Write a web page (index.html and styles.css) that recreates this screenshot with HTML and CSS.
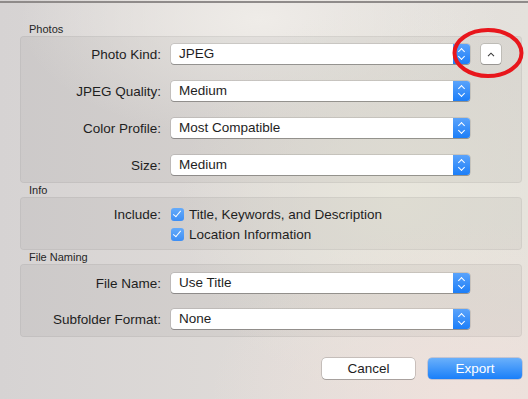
FILE: index.html
```html
<!DOCTYPE html>
<html lang="en">

<head>
    <meta charset="UTF-8">
    <meta name="viewport" content="width=device-width, initial-scale=1.0">
    <title>Export Photos</title>
    <link rel="stylesheet" href="styles.css">
</head>

<body>
    <div class="window">
        <!-- Photos -->
        <div class="section-title">Photos</div>
        <div class="group group-photos">
            <div class="row">
                <label class="row-label">Photo Kind:</label>
                <div class="popup"><span class="popup-text">JPEG</span><span class="popup-arrows"></span></div>
                <button class="disclosure">
                    <svg width="8" height="5" viewBox="0 0 8 5"><path d="M1 4.2 L4 1.2 L7 4.2" fill="none" stroke="#3a3a3a" stroke-width="1.1"/></svg>
                </button>
            </div>
            <div class="row">
                <label class="row-label">JPEG Quality:</label>
                <div class="popup"><span class="popup-text">Medium</span><span class="popup-arrows"></span></div>
            </div>
            <div class="row">
                <label class="row-label">Color Profile:</label>
                <div class="popup"><span class="popup-text">Most Compatible</span><span class="popup-arrows"></span></div>
            </div>
            <div class="row">
                <label class="row-label">Size:</label>
                <div class="popup"><span class="popup-text">Medium</span><span class="popup-arrows"></span></div>
            </div>
        </div>

        <!-- Info -->
        <div class="section-title">Info</div>
        <div class="group group-info">
            <div class="row check-row">
                <label class="row-label">Include:</label>
                <div class="check"><span class="box"></span>Title, Keywords, and Description</div>
            </div>
            <div class="row check-row">
                <span class="row-label"></span>
                <div class="check"><span class="box"></span>Location Information</div>
            </div>
        </div>

        <!-- File Naming -->
        <div class="section-title">File Naming</div>
        <div class="group group-naming">
            <div class="row">
                <label class="row-label">File Name:</label>
                <div class="popup"><span class="popup-text">Use Title</span><span class="popup-arrows"></span></div>
            </div>
            <div class="row">
                <label class="row-label">Subfolder Format:</label>
                <div class="popup"><span class="popup-text">None</span><span class="popup-arrows"></span></div>
            </div>
        </div>

        <div class="buttons">
            <button class="btn">Cancel</button>
            <button class="btn btn-primary">Export</button>
        </div>

        <!-- red annotation circle -->
        <svg class="marker" width="80" height="60" viewBox="0 0 80 60">
            <ellipse cx="40" cy="30" rx="33.5" ry="23" fill="none" stroke="#e8161c" stroke-width="4"/>
        </svg>
    </div>
</body>

</html>
```

FILE: styles.css
```css
/* base */
html, body {
    margin: 0;
    padding: 0;
}

body {
    font-family: "Liberation Sans", Arial, sans-serif;
    font-size: 13.5px;
    color: #1e1e1e;
    width: 528px;
    height: 399px;
    overflow: hidden;
    background-color: #e2dedb;
    background-image:
        radial-gradient(ellipse 260px 180px at 470px 400px, #efe1dc 0%, rgba(239, 225, 220, 0) 100%),
        radial-gradient(ellipse 220px 200px at 400px 200px, #e8e6dc 0%, rgba(232, 230, 220, 0) 100%),
        radial-gradient(ellipse 240px 120px at 260px 20px, #efece8 0%, rgba(239, 236, 232, 0) 100%),
        linear-gradient(90deg, #d6d3d3 0%, #dfdbd8 50%, #e4e1dc 100%);
}

.window {
    position: relative;
    height: 396px;
    border-top: 2px solid #8f8b8a;
    margin-top: 1px;
    padding: 19px 6px 0 20px;
    box-sizing: border-box;
}

/* section titles */
.section-title {
    font-size: 11px;
    line-height: 14px;
    padding-left: 9px;
    color: #262626;
}

/* grouped boxes */
.group {
    background-color: rgba(0, 0, 0, 0.045);
    border: 1px solid rgba(0, 0, 0, 0.05);
    border-radius: 4px;
    display: flex;
    flex-direction: column;
}

.group-photos {
    height: 147px;
    box-sizing: border-box;
    padding-top: 7px;
    gap: 17px;
}

.group-info {
    height: 53px;
    box-sizing: border-box;
    padding-top: 6px;
    gap: 0;
}

.group-naming {
    height: 73px;
    box-sizing: border-box;
    padding-top: 8px;
    gap: 16px;
}

.row {
    display: flex;
    align-items: center;
    height: 20px;
}

.row-label {
    width: 140px;
    text-align: right;
    margin-right: 10px;
    flex-shrink: 0;
}

/* popup select */
.popup {
    width: 299px;
    height: 20px;
    display: flex;
    background-color: #fff;
    border-radius: 3px;
    box-shadow: 0 0 0 0.5px rgba(0, 0, 0, 0.2), 0 1px 0 rgba(0, 0, 0, 0.25);
    overflow: hidden;
}

.popup-text {
    flex: 1;
    padding-left: 8px;
    line-height: 20px;
}

.popup-arrows {
    width: 17px;
    background: linear-gradient(#5aa3fb, #1c7ef8);
    position: relative;
}

.popup-arrows::before,
.popup-arrows::after {
    content: "";
    position: absolute;
    left: 5.5px;
    width: 4px;
    height: 4px;
    border-left: 1.3px solid #fff;
    border-top: 1.3px solid #fff;
}

.popup-arrows::before {
    top: 5px;
    transform: rotate(45deg);
}

.popup-arrows::after {
    top: 10px;
    transform: rotate(225deg);
}

/* small disclosure button */
.disclosure {
    width: 20px;
    height: 20px;
    margin-left: 11px;
    padding: 0;
    background-color: #fff;
    border: none;
    border-radius: 3px;
    box-shadow: 0 0 0 0.5px rgba(0, 0, 0, 0.25), 0 1px 0 rgba(0, 0, 0, 0.2);
    display: flex;
    align-items: center;
    justify-content: center;
}

/* checkboxes */
.check {
    display: flex;
    align-items: center;
}

.box {
    width: 13px;
    height: 13px;
    border-radius: 3px;
    background: linear-gradient(#66abf9, #3d8ef5);
    margin-right: 5px;
    position: relative;
}

.box::after {
    content: "";
    position: absolute;
    left: 4px;
    top: 1px;
    width: 3px;
    height: 7px;
    border-right: 1.5px solid #fff;
    border-bottom: 1.5px solid #fff;
    transform: rotate(40deg);
}

/* bottom buttons */
.buttons {
    display: flex;
    justify-content: flex-end;
    gap: 13px;
    margin-top: 21px;
}

.btn {
    font-family: inherit;
    font-size: 13.5px;
    height: 21px;
    width: 93px;
    padding: 0;
    background-color: #fff;
    color: #1e1e1e;
    border: none;
    border-radius: 4px;
    box-shadow: 0 0 0 0.5px rgba(0, 0, 0, 0.3), 0 1px 0 rgba(0, 0, 0, 0.15);
}

.btn-primary {
    width: 94px;
    color: #fff;
    background: linear-gradient(#6ab0fb, #1a7ff9);
    box-shadow: 0 0 0 0.5px rgba(0, 60, 160, 0.35);
}

/* annotation */
.marker {
    position: absolute;
    left: 448px;
    top: 20px;
}
```
